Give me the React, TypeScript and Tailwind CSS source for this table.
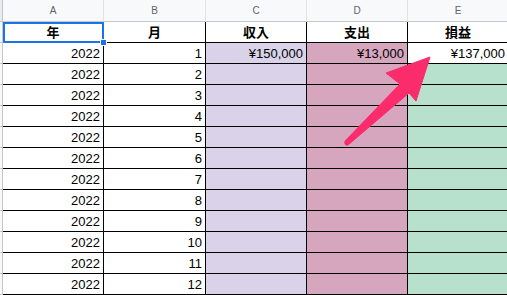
import type { ReactNode } from 'react'

const COLS = ['A', 'B', 'C', 'D', 'E']
const MONTHS = Array.from({ length: 12 }, (_, i) => i + 1)

function Cell({ children, className = '' }: { children?: ReactNode; className?: string }) {
  return (
    <div className={`h-[21px] border-r border-b border-black flex items-center justify-end pr-[3px] pt-[1px] text-[13px] leading-none text-black ${className}`}>
      {children}
    </div>
  )
}

function HeadCell({ children }: { children: ReactNode }) {
  return (
    <div className="h-[21px] border-r border-b border-black flex items-center justify-center pt-[1px] text-[13px] leading-none font-bold text-black font-['Liberation_Sans','Noto_Sans_CJK_JP',sans-serif]">
      {children}
    </div>
  )
}

export default function App() {
  return (
    <div className="relative w-[507px] h-[295px] overflow-hidden bg-white font-['Liberation_Sans',Arial,sans-serif]">
      <div className="grid grid-cols-[3px_101px_102px_101px_101px_101px] w-[509px]">
        {/* column letters */}
        <div className="h-[22px] bg-[#e8eaed] border-r border-b border-[#c4c7c5]" />
        {COLS.map(c => (
          <div
            key={c}
            className="h-[22px] bg-[#f8f9fa] border-r border-b border-r-[#e1e3e1] border-b-[#c4c7c5] flex items-center justify-center text-[10px] text-[#5f6368]"
          >
            {c}
          </div>
        ))}

        {/* title row */}
        <div className="h-[21px] bg-[#f8f9fa] border-r border-b border-[#c4c7c5]" />
        <HeadCell>年</HeadCell>
        <HeadCell>月</HeadCell>
        <HeadCell>収入</HeadCell>
        <HeadCell>支出</HeadCell>
        <HeadCell>損益</HeadCell>

        {MONTHS.map(m => (
          <div key={m} className="contents">
            <div className="h-[21px] bg-[#f8f9fa] border-r border-b border-[#c4c7c5]" />
            <Cell>2022</Cell>
            <Cell>{m}</Cell>
            <Cell className="bg-[#d9d2e9]">{m === 1 ? '¥150,000' : ''}</Cell>
            <Cell className="bg-[#d5a6bd]">{m === 1 ? '¥13,000' : ''}</Cell>
            <Cell className={m === 1 ? 'bg-white' : 'bg-[#b7e1cd]'}>{m === 1 ? '¥137,000' : ''}</Cell>
          </div>
        ))}
      </div>

      {/* selected cell A1 */}
      <div className="absolute left-[3px] top-[22px] w-[101px] h-[21px] border-2 border-[#1a73e8]" />
      <div className="absolute left-[100px] top-[39px] w-[7px] h-[7px] bg-[#1a73e8] border border-white" />

      {/* annotation arrow */}
      <svg className="absolute inset-0 pointer-events-none" width="507" height="295" viewBox="0 0 507 295">
        <path
          d="M430 57 L386 73 L400 84 L345 141 Q344 146 348 145 L409 93 L416 101 Z"
          fill="#fb2c6c"
          stroke="#fb2c6c"
          strokeWidth="1"
          strokeLinejoin="round"
        />
      </svg>
    </div>
  )
}
